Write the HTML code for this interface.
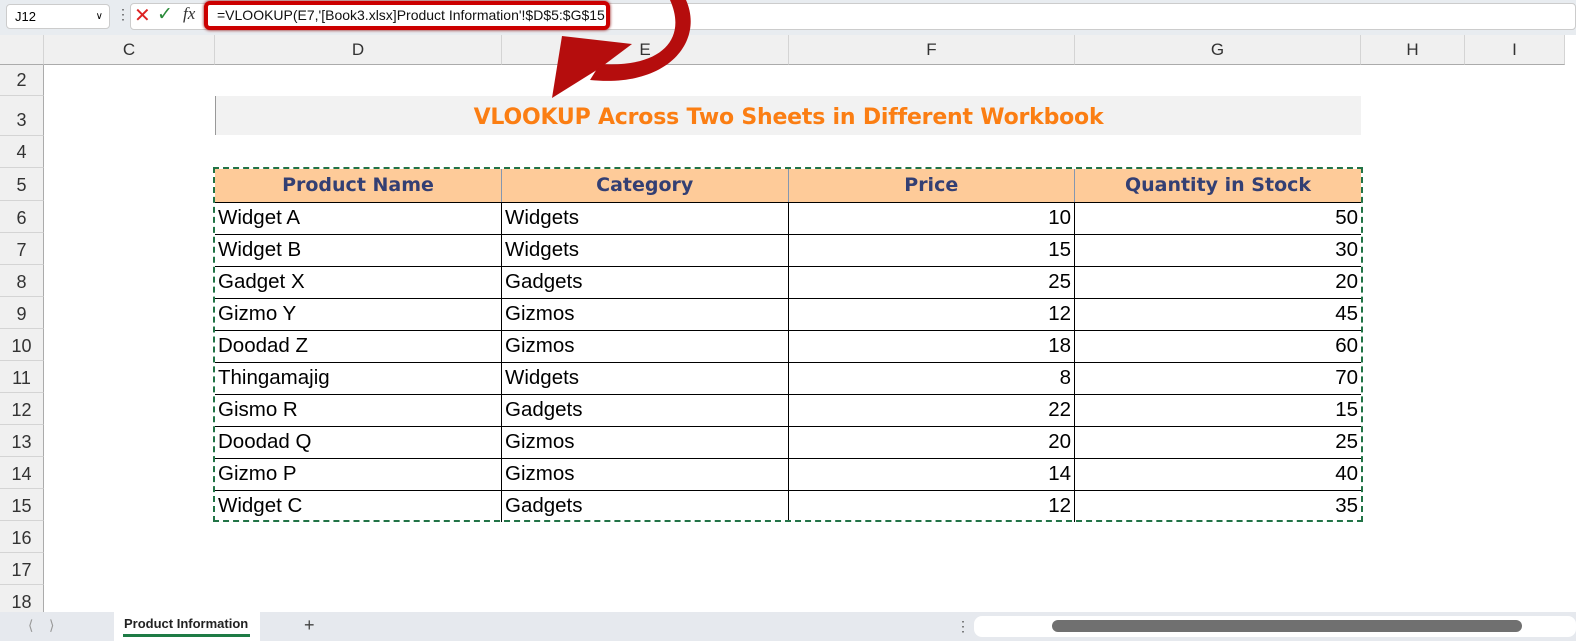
<!DOCTYPE html><html><head><style>
*{margin:0;padding:0;box-sizing:border-box}
body{width:1576px;height:641px;overflow:hidden;background:#fff;font-family:"Liberation Sans",sans-serif;position:relative}
.a{position:absolute}
.ch{position:absolute;top:35px;height:30px;background:#f0f0f0;border-right:1px solid #d4d4d4;border-bottom:1px solid #ababab;text-align:center;line-height:30px;font-size:17px;color:#333}
.rh{position:absolute;left:0;width:44px;background:#f0f0f0;border-bottom:1px solid #d4d4d4;border-right:1px solid #ababab;text-align:center;font-size:18px;color:#333}
table{position:absolute;left:215px;top:169px;width:1146px;table-layout:fixed;border-collapse:collapse;font-size:20.5px}
td{border:1px solid #000;height:32px;padding:0 3px;white-space:nowrap}
th{height:33px;background:#fecb99;color:#333f73;font-family:"DejaVu Sans",sans-serif;font-size:19px;border:1px solid #8497b0;border-bottom:1px solid #000}
tr>*:first-child{border-left:none}tr>*:last-child{border-right:none}
tr:first-child>*{border-top:none}tr:last-child>*{border-bottom:none}
td.n{text-align:right}
</style></head><body>
<div class="a" style="left:0;top:0;width:1576px;height:35px;background:#e8ecf0"></div>
<div class="a" style="left:6px;top:4px;width:104px;height:25px;background:#fff;border:1px solid #ccc;border-radius:4px;font-size:13px;line-height:23px;padding-left:8px">J12<span style="position:absolute;right:6px;top:0;font-size:10px">&#8744;</span></div>
<div class="a" style="left:116px;top:6px;font-size:14px;color:#555">&#8942;</div>
<div class="a" style="left:130px;top:3px;width:1446px;height:27px;background:#fff;border:1px solid #ccc;border-radius:4px"></div>
<div class="a" style="left:134px;top:3px;font-size:20px;color:#d22">&#10005;</div>
<div class="a" style="left:157px;top:3px;font-size:19px;color:#2a8a3a">&#10003;</div>
<div class="a" style="left:183px;top:4px;font-size:17px;font-style:italic;font-family:'Liberation Serif',serif;color:#333">fx</div>
<div class="a" style="left:204px;top:1px;width:406px;height:29px;border:4px solid #c00;border-radius:6px;background:#fff;box-shadow:0 0 3px #800"></div>
<div class="a" style="left:217px;top:7px;font-size:14px;color:#111">=VLOOKUP(E7,'[Book3.xlsx]Product Information'!$D$5:$G$15</div>
<div class="ch" style="left:0;width:44px"></div>
<div class="ch" style="left:44px;width:171px">C</div>
<div class="ch" style="left:215px;width:287px">D</div>
<div class="ch" style="left:502px;width:287px">E</div>
<div class="ch" style="left:789px;width:286px">F</div>
<div class="ch" style="left:1075px;width:286px">G</div>
<div class="ch" style="left:1361px;width:104px">H</div>
<div class="ch" style="left:1465px;width:100px">I</div>
<div class="rh" style="top:65px;height:31px;line-height:31px">2</div>
<div class="rh" style="top:96px;height:40px;line-height:48px">3</div>
<div class="rh" style="top:136px;height:32px;line-height:32px">4</div>
<div class="rh" style="top:168px;height:33px;line-height:34px">5</div>
<div class="rh" style="top:201px;height:32px;line-height:34px">6</div>
<div class="rh" style="top:233px;height:32px;line-height:34px">7</div>
<div class="rh" style="top:265px;height:32px;line-height:34px">8</div>
<div class="rh" style="top:297px;height:32px;line-height:34px">9</div>
<div class="rh" style="top:329px;height:32px;line-height:34px">10</div>
<div class="rh" style="top:361px;height:32px;line-height:34px">11</div>
<div class="rh" style="top:393px;height:32px;line-height:34px">12</div>
<div class="rh" style="top:425px;height:32px;line-height:34px">13</div>
<div class="rh" style="top:457px;height:32px;line-height:34px">14</div>
<div class="rh" style="top:489px;height:32px;line-height:34px">15</div>
<div class="rh" style="top:521px;height:32px;line-height:34px">16</div>
<div class="rh" style="top:553px;height:32px;line-height:34px">17</div>
<div class="rh" style="top:585px;height:32px;line-height:34px">18</div>
<div class="a" style="left:215px;top:96px;width:1146px;height:39px;background:#f2f2f2;border-left:1px solid #999;text-align:center;line-height:44px;font-family:'DejaVu Sans',sans-serif;font-weight:bold;font-size:22px;letter-spacing:-0.2px;color:#fb7e13">VLOOKUP Across Two Sheets in Different Workbook</div>
<table>
<tr><th>Product Name</th><th>Category</th><th>Price</th><th>Quantity in Stock</th></tr>
<tr><td>Widget A</td><td>Widgets</td><td class="n">10</td><td class="n">50</td></tr>
<tr><td>Widget B</td><td>Widgets</td><td class="n">15</td><td class="n">30</td></tr>
<tr><td>Gadget X</td><td>Gadgets</td><td class="n">25</td><td class="n">20</td></tr>
<tr><td>Gizmo Y</td><td>Gizmos</td><td class="n">12</td><td class="n">45</td></tr>
<tr><td>Doodad Z</td><td>Gizmos</td><td class="n">18</td><td class="n">60</td></tr>
<tr><td>Thingamajig</td><td>Widgets</td><td class="n">8</td><td class="n">70</td></tr>
<tr><td>Gismo R</td><td>Gadgets</td><td class="n">22</td><td class="n">15</td></tr>
<tr><td>Doodad Q</td><td>Gizmos</td><td class="n">20</td><td class="n">25</td></tr>
<tr><td>Gizmo P</td><td>Gizmos</td><td class="n">14</td><td class="n">40</td></tr>
<tr><td>Widget C</td><td>Gadgets</td><td class="n">12</td><td class="n">35</td></tr>
</table>
<div class="a" style="left:213px;top:167px;width:1150px;height:355px;border:2px dashed #217346"></div>
<svg class="a" style="left:0;top:0" width="1576" height="120"><path d="M670 0 C 688 40 660 68 600 64 L 590 80 C 670 88 704 40 686 0 Z" fill="#b50d0d"/><path d="M562 36 L 632 44 L 600 68 L 552 98 Z" fill="#b50d0d"/></svg>
<div class="a" style="left:0;top:612px;width:1576px;height:29px;background:#e6e9ee"></div>
<div class="a" style="left:28px;top:617px;font-size:14px;color:#999">&#10216;&nbsp;&nbsp;&nbsp;&nbsp;&#10217;</div>
<div class="a" style="left:114px;top:611px;width:146px;height:30px;background:#fff;font-size:13px;font-weight:bold;color:#222;padding:5px 0 0 10px">Product Information<div style="position:absolute;left:9px;bottom:4px;width:127px;height:3px;background:#1e7b45"></div></div>
<div class="a" style="left:304px;top:615px;font-size:18px;color:#444">+</div>
<div class="a" style="left:956px;top:618px;font-size:14px;color:#555">&#8942;</div>
<div class="a" style="left:974px;top:616px;width:602px;height:21px;background:#fff;border-radius:8px"></div>
<div class="a" style="left:1052px;top:620px;width:470px;height:12px;background:#707070;border-radius:6px"></div>
</body></html>
